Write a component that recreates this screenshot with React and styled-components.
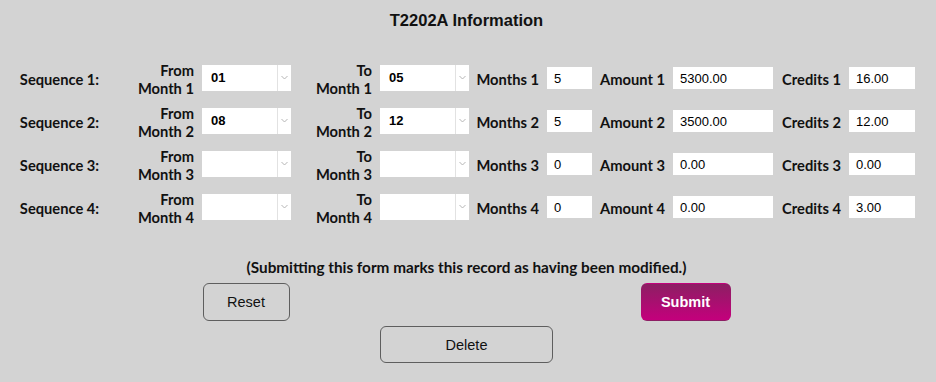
import React from 'react';
import styled, { createGlobalStyle } from 'styled-components';

const GlobalStyle = createGlobalStyle`
  html, body {
    margin: 0;
    padding: 0;
    background: #d3d3d3;
  }
`

const Page = styled.div`
  width: 936px;
  height: 382px;
  box-sizing: border-box;
  padding-right: 3px;
  background: #d3d3d3;
  display: flex;
  flex-direction: column;
  align-items: center;
  font-family: Lato, "Liberation Sans", sans-serif;
  color: #111;
`

const Title = styled.h2`
  margin: 10px 0 0;
  font-family: "Liberation Sans", Arial, sans-serif;
  font-size: 16.5px;
  line-height: 20px;
  font-weight: bold;
  color: #111;
`

const Grid = styled.div`
  align-self: flex-start;
  margin-top: 26px;
  display: grid;
  grid-template-columns: 119px 83px 89px 89px 89px 78px 45px 81px 100px 76px 66px;
  grid-auto-rows: 43px;
  align-items: center;
`

const SeqLabel = styled.div`
  text-align: center;
  font-weight: 700;
  font-size: 14.7px;
  padding-top: 2px;
`

const FieldLabel = styled.label`
  text-align: right;
  padding-right: 8px;
  font-weight: 700;
  font-size: 14.7px;
  line-height: ${p => (p.$twoLine ? '18px' : '20px')};
  padding-top: 2px;
  white-space: nowrap;
`

const SelectBox = styled.div`
  height: 26px;
  background: #fff;
  display: flex;
  align-items: stretch;
  box-sizing: border-box;
`

const SelectValue = styled.div`
  flex: 1;
  display: flex;
  align-items: center;
  padding-left: 9px;
  font-family: "Liberation Sans", Arial, sans-serif;
  font-weight: bold;
  font-size: 13px;
  color: #000;
`

const Arrow = styled.div`
  width: 13px;
  border-left: 1px solid #e2e2e2;
  display: flex;
  align-items: center;
  justify-content: center;
`

const TextInput = styled.div`
  height: 22px;
  background: #fff;
  box-sizing: border-box;
  padding-left: 7px;
  display: flex;
  align-items: center;
  font-family: "Liberation Sans", Arial, sans-serif;
  font-size: 13px;
  color: #000;
  margin-top: 1px;
`

const Notice = styled.p`
  margin: 30px 0 0;
  font-weight: 700;
  font-size: 15.3px;
  line-height: 18px;
`

const ButtonRow = styled.div`
  width: 528px;
  margin-top: 7px;
  display: flex;
  justify-content: space-between;
`

const Button = styled.button`
  width: ${p => p.$width}px;
  height: 38px;
  box-sizing: border-box;
  border-radius: 6px;
  border: 1px solid ${p => (p.$primary ? 'transparent' : '#5e5e5e')};
  background: ${p => (p.$primary ? 'linear-gradient(#8c1f63, #c4007c)' : 'transparent')};
  color: ${p => (p.$primary ? '#fff' : '#111')};
  font-family: "Liberation Sans", Arial, sans-serif;
  font-size: 14.5px;
  font-weight: ${p => (p.$primary ? 'bold' : 'normal')};
  padding: 0;
`

const DeleteButton = styled(Button)`
  margin-top: 5px;
  height: 37px;
`

const Chevron = () => (
  <svg width="7" height="5" viewBox="0 0 7 5">
    <path d="M0.5 1 L3.5 4 L6.5 1" fill="none" stroke="#b5b5b5" strokeWidth="1" />
  </svg>
)

const Select = ({ value }) => (
  <SelectBox>
    <SelectValue>{value}</SelectValue>
    <Arrow><Chevron /></Arrow>
  </SelectBox>
)

const rows = [
  { from: '01', to: '05', months: '5', amount: '5300.00', credits: '16.00' },
  { from: '08', to: '12', months: '5', amount: '3500.00', credits: '12.00' },
  { from: '', to: '', months: '0', amount: '0.00', credits: '0.00' },
  { from: '', to: '', months: '0', amount: '0.00', credits: '3.00' },
]

export default function App() {
  return (
    <>
      <GlobalStyle />
      <Page>
        <Title>T2202A Information</Title>
        <Grid>
          {rows.map((r, i) => {
            const n = i + 1
            return (
              <React.Fragment key={n}>
                <SeqLabel>Sequence {n}:</SeqLabel>
                <FieldLabel $twoLine>From<br />Month {n}</FieldLabel>
                <Select value={r.from} />
                <FieldLabel $twoLine>To<br />Month {n}</FieldLabel>
                <Select value={r.to} />
                <FieldLabel>Months {n}</FieldLabel>
                <TextInput>{r.months}</TextInput>
                <FieldLabel>Amount {n}</FieldLabel>
                <TextInput>{r.amount}</TextInput>
                <FieldLabel>Credits {n}</FieldLabel>
                <TextInput>{r.credits}</TextInput>
              </React.Fragment>
            )
          })}
        </Grid>
        <Notice>(Submitting this form marks this record as having been modified.)</Notice>
        <ButtonRow>
          <Button $width={87}>Reset</Button>
          <Button $width={90} $primary>Submit</Button>
        </ButtonRow>
        <DeleteButton $width={173}>Delete</DeleteButton>
      </Page>
    </>
  )
}
